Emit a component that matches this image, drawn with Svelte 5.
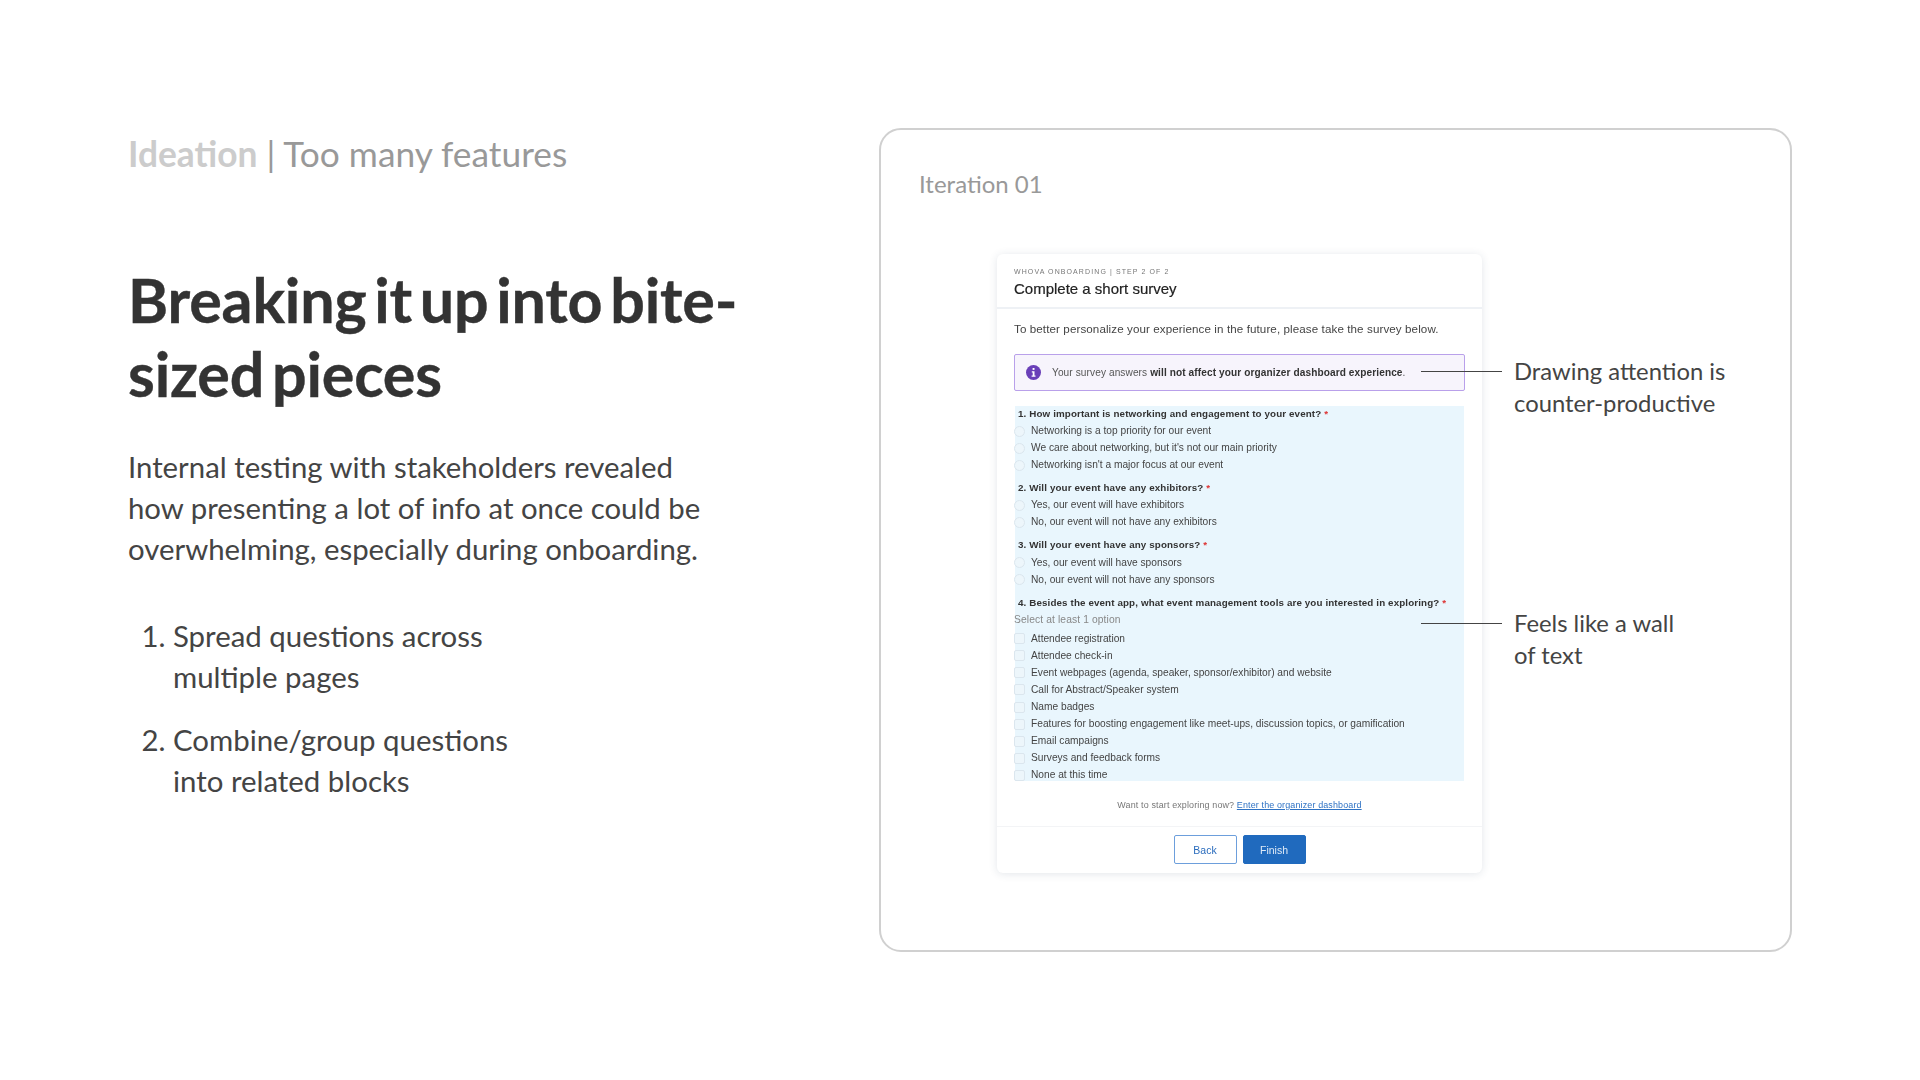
<script lang="ts">
  const questions = [
    {
      title: "1. How important is networking and engagement to your event?",
      kind: "radio",
      options: [
        "Networking is a top priority for our event",
        "We care about networking, but it's not our main priority",
        "Networking isn't a major focus at our event",
      ],
    },
    {
      title: "2. Will your event have any exhibitors?",
      kind: "radio",
      options: ["Yes, our event will have exhibitors", "No, our event will not have any exhibitors"],
    },
    {
      title: "3. Will your event have any sponsors?",
      kind: "radio",
      options: ["Yes, our event will have sponsors", "No, our event will not have any sponsors"],
    },
    {
      title: "4. Besides the event app, what event management tools are you interested in exploring?",
      kind: "check",
      hint: "Select at least 1 option",
      options: [
        "Attendee registration",
        "Attendee check-in",
        "Event webpages (agenda, speaker, sponsor/exhibitor) and website",
        "Call for Abstract/Speaker system",
        "Name badges",
        "Features for boosting engagement like meet-ups, discussion topics, or gamification",
        "Email campaigns",
        "Surveys and feedback forms",
        "None at this time",
      ],
    },
  ];
</script>

<div class="slide">
  <section class="copy">
    <p class="kicker"><span class="kicker__light">Ideation</span> | Too many features</p>
    <h1>Breaking it up into bite-sized pieces</h1>
    <p class="lead">Internal testing with stakeholders revealed how presenting a lot of info at once could be overwhelming, especially during onboarding.</p>
    <ol>
      <li>Spread questions across<br />multiple pages</li>
      <li>Combine/group questions<br />into related blocks</li>
    </ol>
  </section>

  <section class="panel">
    <h2>Iteration 01</h2>

    <div class="card">
      <header class="card__head">
        <div class="eyebrow">WHOVA ONBOARDING | STEP 2 OF 2</div>
        <div class="card__title">Complete a short survey</div>
      </header>

      <div class="card__body">
        <p class="intro">To better personalize your experience in the future, please take the survey below.</p>

        <div class="notice">
          <svg class="notice__icon" width="15" height="15" viewBox="0 0 15 15">
            <circle cx="7.5" cy="7.5" r="7.5" fill="#6a3fb8" />
            <rect x="6.6" y="3" width="1.9" height="1.9" fill="#fff" />
            <path d="M5.8 6.2h2.7v4.4h1v1.2H5.6v-1.2h1.1V7.4h-.9z" fill="#fff" />
          </svg>
          <span>Your survey answers <b>will not affect your organizer dashboard experience</b>.</span>
        </div>

        <div class="survey">
          {#each questions as q}
            <div class="question">{q.title} <span class="req">*</span></div>
            {#if q.hint}
              <div class="hint">{q.hint}</div>
            {/if}
            {#each q.options as opt}
              <div class="option">
                <span class="mark" class:mark--radio={q.kind === "radio"}></span>
                <span>{opt}</span>
              </div>
            {/each}
          {/each}
        </div>

        <p class="explore">Want to start exploring now? <a href="#top">Enter the organizer dashboard</a></p>
      </div>

      <footer class="card__foot">
        <button class="btn">Back</button>
        <button class="btn btn--primary">Finish</button>
      </footer>
    </div>

    <div class="callout callout--one">
      <span class="callout__line"></span>
      <p>Drawing attention is<br />counter-productive</p>
    </div>
    <div class="callout callout--two">
      <span class="callout__line"></span>
      <p>Feels like a wall<br />of text</p>
    </div>
  </section>
</div>

<style>
  :global(body) {
    margin: 0;
    background: #fff;
  }

  .slide {
    width: 1920px;
    height: 1080px;
    display: flex;
    overflow: hidden;
    font-family: Lato, sans-serif;
    box-sizing: border-box;
    padding-top: 128px;
  }

  .copy {
    width: 879px;
    padding-left: 128px;
    box-sizing: border-box;
    flex-shrink: 0;
  }

  .kicker {
    margin: 0;
    font-size: 35.3px;
    line-height: 52px;
    color: #999;
  }

  .kicker__light {
    color: #ccc;
    font-weight: 700;
  }

  h1 {
    margin: 83px 0 0;
    width: 620px;
    font-size: 61px;
    line-height: 73.5px;
    font-weight: 700;
    letter-spacing: -0.15px;
    word-spacing: -7px;
    -webkit-text-stroke: 0.4px #333;
    color: #333;
  }

  .lead {
    margin: 36px 0 0;
    width: 600px;
    font-size: 29.35px;
    line-height: 41px;
    color: #444;
  }

  ol {
    margin: 46px 0 0;
    padding: 0 0 0 45px;
    font-size: 29.4px;
    line-height: 41px;
    color: #444;
  }

  li + li {
    margin-top: 22px;
  }

  .panel {
    position: relative;
    width: 913px;
    height: 824px;
    box-sizing: border-box;
    border: 2px solid #d0d0d0;
    border-radius: 22px;
    padding: 37px 0 0 38px;
  }

  h2 {
    margin: 0;
    font-size: 24px;
    line-height: 34px;
    font-weight: 400;
    color: #999;
  }

  .card {
    width: 485px;
    margin: 53px 0 0 78px;
    border-radius: 6px;
    box-shadow: 0 1px 8px rgba(40, 60, 90, 0.13);
    font-family: "Liberation Sans", Arial, sans-serif;
    background: #fff;
    filter: blur(0.3px);
  }

  .card__head {
    padding: 13px 17px 9px;
    border-bottom: 2px solid #eef1f5;
  }

  .eyebrow {
    font-size: 7px;
    line-height: 10px;
    letter-spacing: 1.1px;
    color: #777;
  }

  .card__title {
    margin-top: 2px;
    font-size: 15px;
    line-height: 19px;
    color: #222;
    -webkit-text-stroke: 0.2px #222;
  }

  .card__body {
    padding: 13px 17px 0;
  }

  .intro {
    margin: 0;
    font-size: 11.6px;
    line-height: 14px;
    letter-spacing: 0.1px;
    color: #444;
  }

  .notice {
    display: flex;
    align-items: center;
    height: 37px;
    margin-top: 18px;
    padding-left: 11px;
    box-sizing: border-box;
    border: 1px solid #b9a0ea;
    border-radius: 2px;
    background: #f7f4fc;
    font-size: 10.1px;
    letter-spacing: 0.1px;
    color: #555;
  }

  .notice b {
    color: #333;
  }

  .notice__icon {
    margin-right: 11px;
    flex-shrink: 0;
  }

  .survey {
    height: 375px;
    margin: 15px 1px 0;
    padding-top: 1px;
    box-sizing: border-box;
    background: #e9f6fd;
  }

  .question {
    padding-left: 3px;
    margin-top: 7.5px;
    margin-bottom: 1.5px;
    font-size: 9.8px;
    line-height: 14px;
    font-weight: 700;
    letter-spacing: 0.12px;
    color: #333;
  }

  .question:first-child {
    margin-top: 0;
  }

  .req {
    color: #d33;
  }

  .hint {
    margin: 3.5px 0 3px -1px;
    font-size: 10.3px;
    line-height: 14px;
    letter-spacing: 0.1px;
    color: #888;
  }

  .option {
    display: flex;
    align-items: center;
    gap: 6px;
    height: 17.1px;
    margin-left: -1px;
    font-size: 10.2px;
    line-height: 14px;
    color: #444;
  }

  .mark {
    width: 11px;
    height: 11px;
    box-sizing: border-box;
    border: 1px solid #dbe6ee;
    border-radius: 2px;
    background: #edf6fb;
    flex-shrink: 0;
  }

  .mark--radio {
    border-radius: 50%;
  }

  .explore {
    margin: 17px 0 0;
    text-align: center;
    font-size: 8.95px;
    line-height: 14px;
    letter-spacing: 0.14px;
    color: #777;
  }

  .explore a {
    color: #2e72c4;
  }

  .card__foot {
    display: flex;
    justify-content: center;
    gap: 6px;
    margin-top: 14px;
    padding: 8px 0 9px;
    border-top: 1px solid #f3f4f6;
  }

  .btn {
    width: 63px;
    height: 29px;
    padding: 0;
    box-sizing: border-box;
    border: 1px solid #6d9fdc;
    border-radius: 2px;
    background: #fff;
    color: #2a6cbd;
    font-family: inherit;
    font-size: 10.5px;
  }

  .btn--primary {
    background: #206abe;
    border-color: #206abe;
    color: #dfeaf7;
  }

  .callout {
    position: absolute;
    left: 540px;
    display: flex;
    align-items: flex-start;
    gap: 12px;
    font-size: 23.8px;
    line-height: 32px;
    color: #444;
  }

  .callout--one {
    top: 225px;
  }

  .callout--two {
    top: 477px;
  }

  .callout p {
    margin: 0;
    white-space: nowrap;
  }

  .callout__line {
    width: 81px;
    height: 1px;
    margin-top: 16px;
    background: #444;
  }
</style>
